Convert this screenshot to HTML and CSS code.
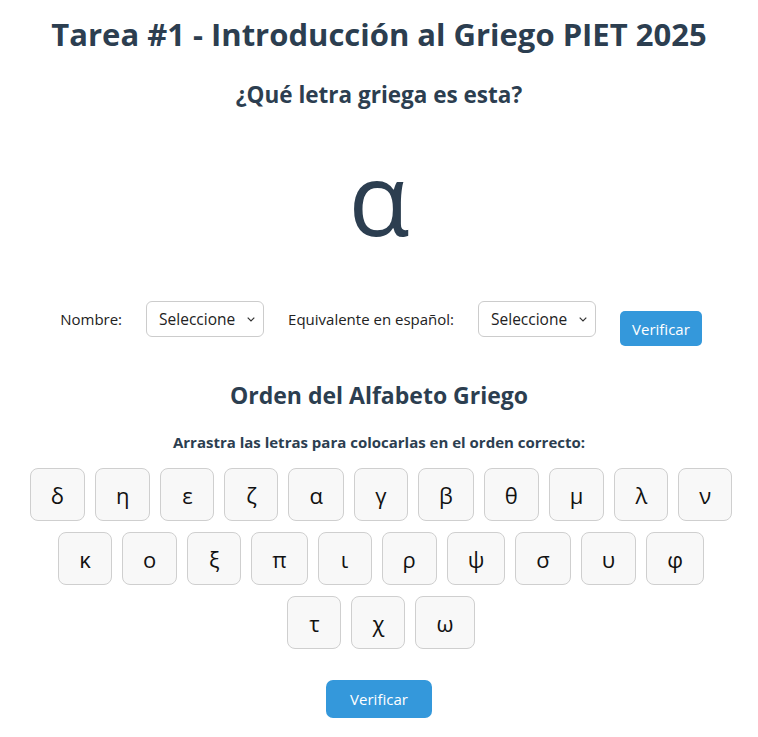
FILE: index.html
```html
<!DOCTYPE html>
<html lang="es">
<head>
<meta charset="utf-8">
<title>Tarea #1 - Introducción al Griego PIET 2025</title>
<link rel="stylesheet" href="styles.css">
</head>
<body>
  <h1 class="title">Tarea #1 - Introducción al Griego PIET 2025</h1>
  <h2 class="subtitle">¿Qué letra griega es esta?</h2>
  <div class="big-letter">α</div>
  <div class="form-row">
    <label class="form-label" for="nombre">Nombre:</label>
    <select id="nombre" class="form-select"><option>Seleccione</option></select>
    <label class="form-label" for="equiv">Equivalente en español:</label>
    <select id="equiv" class="form-select"><option>Seleccione</option></select>
    <button class="btn btn-small">Verificar</button>
  </div>
  <h2 class="section-title">Orden del Alfabeto Griego</h2>
  <p class="instructions">Arrastra las letras para colocarlas en el orden correcto:</p>
  <div class="tiles">
    <div class="tile">δ</div>
    <div class="tile">η</div>
    <div class="tile">ε</div>
    <div class="tile">ζ</div>
    <div class="tile">α</div>
    <div class="tile">γ</div>
    <div class="tile">β</div>
    <div class="tile">θ</div>
    <div class="tile">μ</div>
    <div class="tile">λ</div>
    <div class="tile">ν</div>
    <div class="tile">κ</div>
    <div class="tile">ο</div>
    <div class="tile">ξ</div>
    <div class="tile">π</div>
    <div class="tile">ι</div>
    <div class="tile">ρ</div>
    <div class="tile">ψ</div>
    <div class="tile">σ</div>
    <div class="tile">υ</div>
    <div class="tile">φ</div>
    <div class="tile">τ</div>
    <div class="tile">χ</div>
    <div class="tile">ω</div>
  </div>
  <div class="bottom">
    <button class="btn btn-large">Verificar</button>
  </div>
</body>
</html>
```
FILE: styles.css
```css
html, body {
  background: #ffffff;
}
body {
  margin: 0;
  padding: 13px 20px 0;
  font-family: "Open Sans", "Noto Sans", sans-serif;
  text-align: center;
  color: #222;
}
.title {
  margin: 0;
  font-size: 31px;
  line-height: 43px;
  font-weight: 700;
  color: #2c3e50;
}
.subtitle {
  margin: 24px 0 0;
  font-size: 22.5px;
  line-height: 30px;
  font-weight: 700;
  color: #2c3e50;
}
.big-letter {
  margin-top: 27px;
  font-size: 100px;
  line-height: 120px;
  color: #2c3e50;
}
.form-row {
  margin-top: 44px;
  display: flex;
  justify-content: center;
  align-items: flex-start;
  gap: 24px;
  padding-left: 4px;
}
.form-label {
  font-size: 15px;
  line-height: 36px;
  color: #222;
}
.form-select {
  -webkit-appearance: none;
  appearance: none;
  width: 118px;
  height: 36px;
  padding: 0 22px 0 12px;
  font-family: "Open Sans", sans-serif;
  font-size: 15.5px;
  color: #222;
  background-color: #fff;
  background-image: url("data:image/svg+xml,%3Csvg xmlns='http://www.w3.org/2000/svg' width='8' height='5' viewBox='0 0 8 5'%3E%3Cpath d='M0.7 0.7 L4 4 L7.3 0.7' fill='none' stroke='%23333' stroke-width='1.2'/%3E%3C/svg%3E");
  background-repeat: no-repeat;
  background-position: right 8px center;
  border: 1px solid #ccc;
  border-radius: 6px;
}
.btn {
  background: #3498db;
  color: #fff;
  border: none;
  font-family: "Open Sans", sans-serif;
  font-size: 15px;
  cursor: pointer;
}
.btn-small {
  margin-top: 10px;
  height: 35px;
  padding: 0 12px;
  border-radius: 5px;
}
.section-title {
  margin: 34px 0 0;
  font-size: 23px;
  line-height: 30px;
  font-weight: 700;
  color: #2c3e50;
}
.instructions {
  margin: 22px 0 0;
  font-size: 15px;
  line-height: 20px;
  font-weight: 700;
  color: #2c3e50;
}
.tiles {
  margin: 16px auto 0;
  max-width: 704px;
  display: flex;
  flex-wrap: wrap;
  justify-content: center;
  gap: 11px 10px;
  padding-left: 4px;
}
.tile {
  box-sizing: border-box;
  min-width: 54px;
  height: 53px;
  padding: 0 20px;
  display: flex;
  align-items: center;
  justify-content: center;
  font-size: 22px;
  color: #111;
  background: #f8f8f8;
  border: 1px solid #cfcfcf;
  border-radius: 8px;
}
.bottom {
  margin-top: 31px;
}
.btn-large {
  width: 106px;
  height: 38px;
  border-radius: 7px;
}
```
